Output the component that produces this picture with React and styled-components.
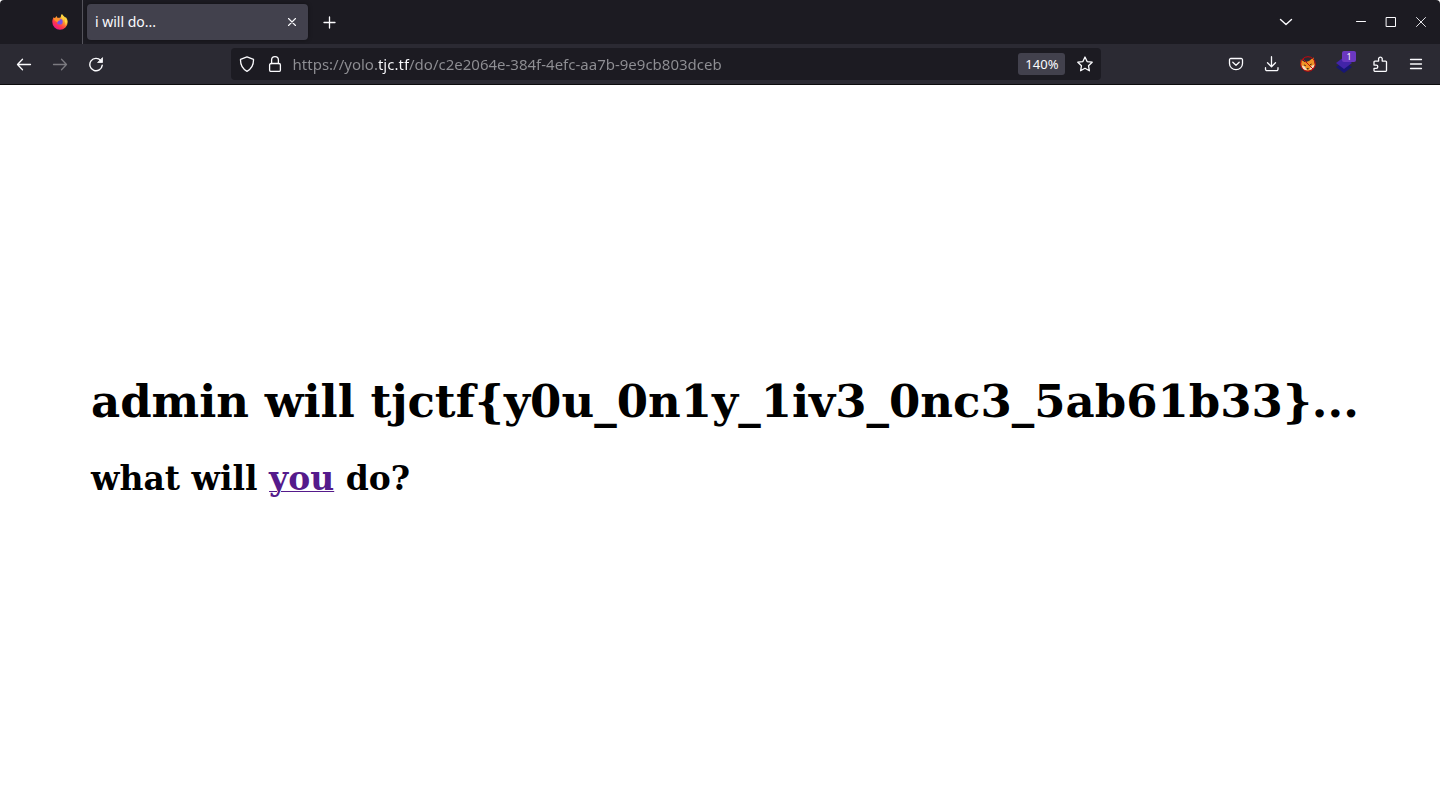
import React from "react";
import styled, { createGlobalStyle } from "styled-components";

const Global = createGlobalStyle`
  * { box-sizing: border-box; }
  html, body { margin: 0; background: #ffffff; }
  button, input { font: inherit; color: inherit; margin: 0; }
`;

const Browser = styled.div`
  display: flex;
  flex-direction: column;
  min-height: 100vh;
  font-family: "Noto Sans", sans-serif;
  color: #fbfbfe;
`;

const TabBar = styled.header`
  display: flex;
  align-items: center;
  height: 44px;
  padding-right: 4px;
  background: #1c1b22;
  border-radius: 4px 4px 0 0;
`;

const PinnedTab = styled.button`
  display: flex;
  align-items: center;
  justify-content: flex-end;
  width: 83px;
  height: 44px;
  padding: 0 14px 0 0;
  border: 0;
  border-right: 1px solid #55545c;
  background: none;
`;

const Tab = styled.div`
  display: flex;
  align-items: center;
  justify-content: space-between;
  width: 221px;
  height: 36px;
  margin-left: 4px;
  padding: 0 4px 0 8px;
  border-radius: 4px;
  background: #42414d;
  box-shadow: 0 0 4px rgba(0, 0, 0, 0.4);
  font-size: 14px;
  line-height: 20px;
`;

const IconButton = styled.button`
  display: flex;
  flex: none;
  align-items: center;
  justify-content: center;
  width: ${(p) => p.$width || 36}px;
  height: 32px;
  padding: 0;
  border: 0;
  border-radius: 4px;
  background: none;
  color: ${(p) => (p.$dim ? "#7b7a80" : "#fbfbfe")};
  &:hover { background: #52525e; }
`;

const TabTools = styled.div`
  display: flex;
  margin-left: auto;
`;

const WindowControls = styled.div`
  display: flex;
  margin-left: 42px;
`;

const NavBar = styled.nav`
  display: flex;
  align-items: center;
  height: 41px;
  padding: 0 6px;
  background: #2b2a33;
  border-bottom: 1px solid #0c0c0d;
`;

const Spring = styled.div`
  flex: 117 1 0;
`;

const AddressBar = styled.form`
  display: flex;
  flex: 870 1 0;
  align-items: center;
  min-width: 0;
  height: 32px;
  padding: 0 2px;
  border-radius: 4px;
  background: #1c1b22;
`;

const AddressInput = styled.input`
  flex: 1;
  min-width: 0;
  height: 32px;
  margin-left: 4px;
  padding: 0;
  border: 0;
  outline: 0;
  font-size: 15px;
  line-height: 20px;
  color: transparent;
  background: linear-gradient(90deg, #8f8f94 85px, #fbfbfe 85px 116px, #8f8f94 116px);
  background-clip: text;
  -webkit-background-clip: text;
`;

const ZoomButton = styled.button`
  width: 47px;
  height: 22px;
  margin: 0 6px;
  padding: 0;
  border: 0;
  border-radius: 3px;
  background: #42414d;
  font-size: 13px;
  line-height: 22px;
`;

const BadgeButton = styled(IconButton)`
  position: relative;
`;

const Badge = styled.span`
  position: absolute;
  top: 3px;
  right: 6px;
  width: 14px;
  height: 11px;
  border-radius: 2px;
  background: #6b38c0;
  font-size: 9px;
  line-height: 11px;
  text-align: center;
`;

const Page = styled.main`
  display: flex;
  flex: 1;
  flex-direction: column;
  justify-content: center;
  padding: 4px 91px 0;
  background: #ffffff;
  color: #000000;
  font-family: "DejaVu Serif", serif;
`;

const Title = styled.h1`
  margin: 0 0 31px;
  font-size: 45px;
  line-height: 52px;
  white-space: nowrap;
`;

const Subtitle = styled.h2`
  margin: 0;
  font-size: 33px;
  line-height: 40px;
`;

const Link = styled.a`
  color: #551a8b;
  text-decoration-thickness: 1px;
`;

const Glyph = ({ children, width = 1.4, size = 16 }) => (
  <svg width={size} height={size} viewBox={`0 0 ${size} ${size}`} fill="none" stroke="currentColor"
    strokeWidth={width} strokeLinecap="round" strokeLinejoin="round" aria-hidden="true">
    {children}
  </svg>
);

const FirefoxLogo = () => (
  <svg width="16" height="16" viewBox="0 0 16 16" aria-hidden="true">
    <defs>
      <linearGradient id="flame" x1="0.85" y1="0.1" x2="0.25" y2="0.95">
        <stop offset="0" stopColor="#fff44f" />
        <stop offset="0.35" stopColor="#ffa02c" />
        <stop offset="0.7" stopColor="#ff3b47" />
        <stop offset="1" stopColor="#e9148c" />
      </linearGradient>
    </defs>
    <path d="M1.7 3.2 3 4.3 4.4 2l1.3 2C7.3 3.5 8 3.8 8.8 3.2 8.7 1.8 9.3.6 10 0c.8 1.6 2.4 2.2 3.3 3.8l.4-.8c1.3 1.5 2 3.2 2 5A7.7 7.7 0 0 1 .3 8c0-1.8.5-3.5 1.4-4.8z" fill="url(#flame)" />
    <circle cx="7.8" cy="7.7" r="2.9" fill="#7750e8" />
    <path d="M1.6 4.6c1.2-.9 2.900-1 4.100-.2l2.800 1.200c-.2 1-1.500 1-2.300 1.400-.4.500-.2 1.200-.8 1.600-.6-1.300-3.200-1.600-3.800-4z" fill="#ff9228" />
    <path d="M9.300 1.200c.5 2.200 3.200 3 3.300 6.300.8-1 .8-2 .6-3.200 2 2.500 2.100 5 .4 7.300C14.500 6.500 9.500 5 9.300 1.200z" fill="#ffe047" />
  </svg>
);

const FoxBlocked = () => (
  <svg width="16" height="16" viewBox="0 0 16 16" aria-hidden="true">
    <path d="M.8 3.500 5 6.200 9 5l4.500-3.500.8 5 .9 3-3.200 4-4 1.600-4.600-1.300L.8 9z" fill="#f09426" />
    <path d="m1.400 9.200 3.300 1.200 2.600 4.200-4-.8zM14.800 8.500l-3 1.200-2.700 4.400 3.800-1.300z" fill="#f3dcc2" />
    <path d="m6.500 12.300 2.400-.3-1 1.700z" fill="#222222" />
    <path d="m4 9 1.800.6M10 8.800l1.700-.8" stroke="#3a2314" strokeWidth=".9" />
    <circle cx="8" cy="8" r="7.300" fill="none" stroke="#c4070d" strokeWidth="1" />
    <path d="m2.800 2.800 10.400 10.400" stroke="#c4070d" strokeWidth="1" />
  </svg>
);

const Layers = () => (
  <svg width="16" height="18" viewBox="0 0 16 18" aria-hidden="true">
    <path d="m0 12 8-5 8 5-8 6z" fill="#171675" />
    <path d="m0 8 8-6 8 6-8 6z" fill="#4224a8" />
  </svg>
);

export default function App() {
  return (
    <Browser>
      <Global />
      <TabBar>
        <PinnedTab aria-label="Firefox View"><FirefoxLogo /></PinnedTab>
        <Tab>
          <span>i will do...</span>
          <IconButton $width={24} aria-label="Close tab">
            <Glyph width={1.1}><path d="m4.500 4.500 7 7M11.500 4.500l-7 7" /></Glyph>
          </IconButton>
        </Tab>
        <IconButton $width={43} aria-label="New tab">
          <Glyph width={1.3} size={17}><path d="M8.500 3v11M3 8.500h11" /></Glyph>
        </IconButton>
        <TabTools>
          <IconButton aria-label="List all tabs">
            <Glyph width={1.4}><path d="m2.500 5.500 5.500 5 5.500-5" /></Glyph>
          </IconButton>
          <WindowControls>
            <IconButton $width={30} aria-label="Minimize">
              <Glyph width={1}><path d="M3.500 7.500h9" /></Glyph>
            </IconButton>
            <IconButton $width={30} aria-label="Maximize">
              <Glyph width={1}><path d="M3.500 3.500h9v9h-9z" strokeLinejoin="miter" /></Glyph>
            </IconButton>
            <IconButton $width={30} aria-label="Close window">
              <Glyph width={0.9}><path d="m3.500 3.500 9 9M12.500 3.500l-9 9" /></Glyph>
            </IconButton>
          </WindowControls>
        </TabTools>
      </TabBar>
      <NavBar aria-label="Navigation">
        <IconButton aria-label="Back">
          <Glyph width={1.300}><path d="M14.500 8.500h-13M6.500 3.300 1.500 8.500l5 5.200" /></Glyph>
        </IconButton>
        <IconButton $dim aria-label="Forward" disabled>
          <Glyph width={1.300}><path d="M1.500 8.500h13M9.500 3.300l5 5.200-5 5.200" /></Glyph>
        </IconButton>
        <IconButton aria-label="Reload">
          <Glyph width={1.400}>
            <path d="M12.800 4.600A6.200 6.200 0 1 0 14.200 9.300" />
            <path d="M14.500 2v4.500H10z" fill="currentColor" strokeWidth=".8" />
          </Glyph>
        </IconButton>
        <Spring />
        <AddressBar onSubmit={(e) => e.preventDefault()}>
          <IconButton type="button" $width={28} aria-label="Tracking protection">
            <Glyph width={1.300}><path d="M8 .9 14.500 3.400C14.700 9 12.500 13 8 15.300 3.500 13 1.300 9 1.500 3.400z" /></Glyph>
          </IconButton>
          <IconButton type="button" $width={28} aria-label="Site security">
            <Glyph width={1.300}><rect x="2.600" y="7.500" width="10.800" height="7.900" rx="1.500" /><path d="M4.600 7.500V4.100a3.400 3.400 0 0 1 6.800 0v3.400" /></Glyph>
          </IconButton>
          <AddressInput
            aria-label="Address"
            spellCheck="false"
            defaultValue="https://yolo.tjc.tf/do/c2e2064e-384f-4efc-aa7b-9e9cb803dceb"
          />
          <ZoomButton type="button">140%</ZoomButton>
          <IconButton type="button" $width={28} aria-label="Bookmark this page">
            <Glyph width={1.300}><path d="m8 1 2.100 4.600 5.100.6-3.700 3.500.9 5.100L8 12.300l-4.400 2.500.9-5.100L.8 6.200l5.100-.6z" /></Glyph>
          </IconButton>
        </AddressBar>
        <Spring />
        <IconButton aria-label="Save to Pocket">
          <Glyph width={1.300}><path d="M2.800 2.500h10.400a1.300 1.300 0 0 1 1.300 1.300V7.500a6.500 6.200 0 0 1-13 0V3.800a1.300 1.300 0 0 1 1.300-1.300z" /><path d="m4.800 6.200 3.200 3 3.200-3" /></Glyph>
        </IconButton>
        <IconButton aria-label="Downloads">
          <Glyph width={1.300}><path d="M7.500.7v9.800M3.500 6.700l4 4 4-4M1.500 11.700v1.500a1.500 1.500 0 0 0 1.500 1.500h9.500a1.500 1.500 0 0 0 1.500-1.500v-1.500" /></Glyph>
        </IconButton>
        <IconButton aria-label="FoxyProxy"><FoxBlocked /></IconButton>
        <BadgeButton aria-label="Extension, 1 item"><Layers /><Badge>1</Badge></BadgeButton>
        <IconButton aria-label="Extensions">
          <Glyph width={1.300}><path d="M2 7.500V6a.9.9 0 0 1 .9-.9h3.700V2.500a1.900 1.900 0 0 1 3.600 0v2.600h3.400a.9.900 0 0 1 .9.900v8.500a.9.900 0 0 1-.9.900H2.900a.9.900 0 0 1-.9-.9v-2.200h2.200a1.600 1.600 0 0 0 0-3.200H2z" /></Glyph>
        </IconButton>
        <IconButton aria-label="Menu">
          <Glyph width={1.300}><path d="M2.500 3.500h11M2.500 8h11M2.500 12.500h11" /></Glyph>
        </IconButton>
      </NavBar>
      <Page>
        <Title>admin will tjctf{"{y0u_0n1y_1iv3_0nc3_5ab61b33}"}...</Title>
        <Subtitle>what will <Link href="/">you</Link> do?</Subtitle>
      </Page>
    </Browser>
  );
}
